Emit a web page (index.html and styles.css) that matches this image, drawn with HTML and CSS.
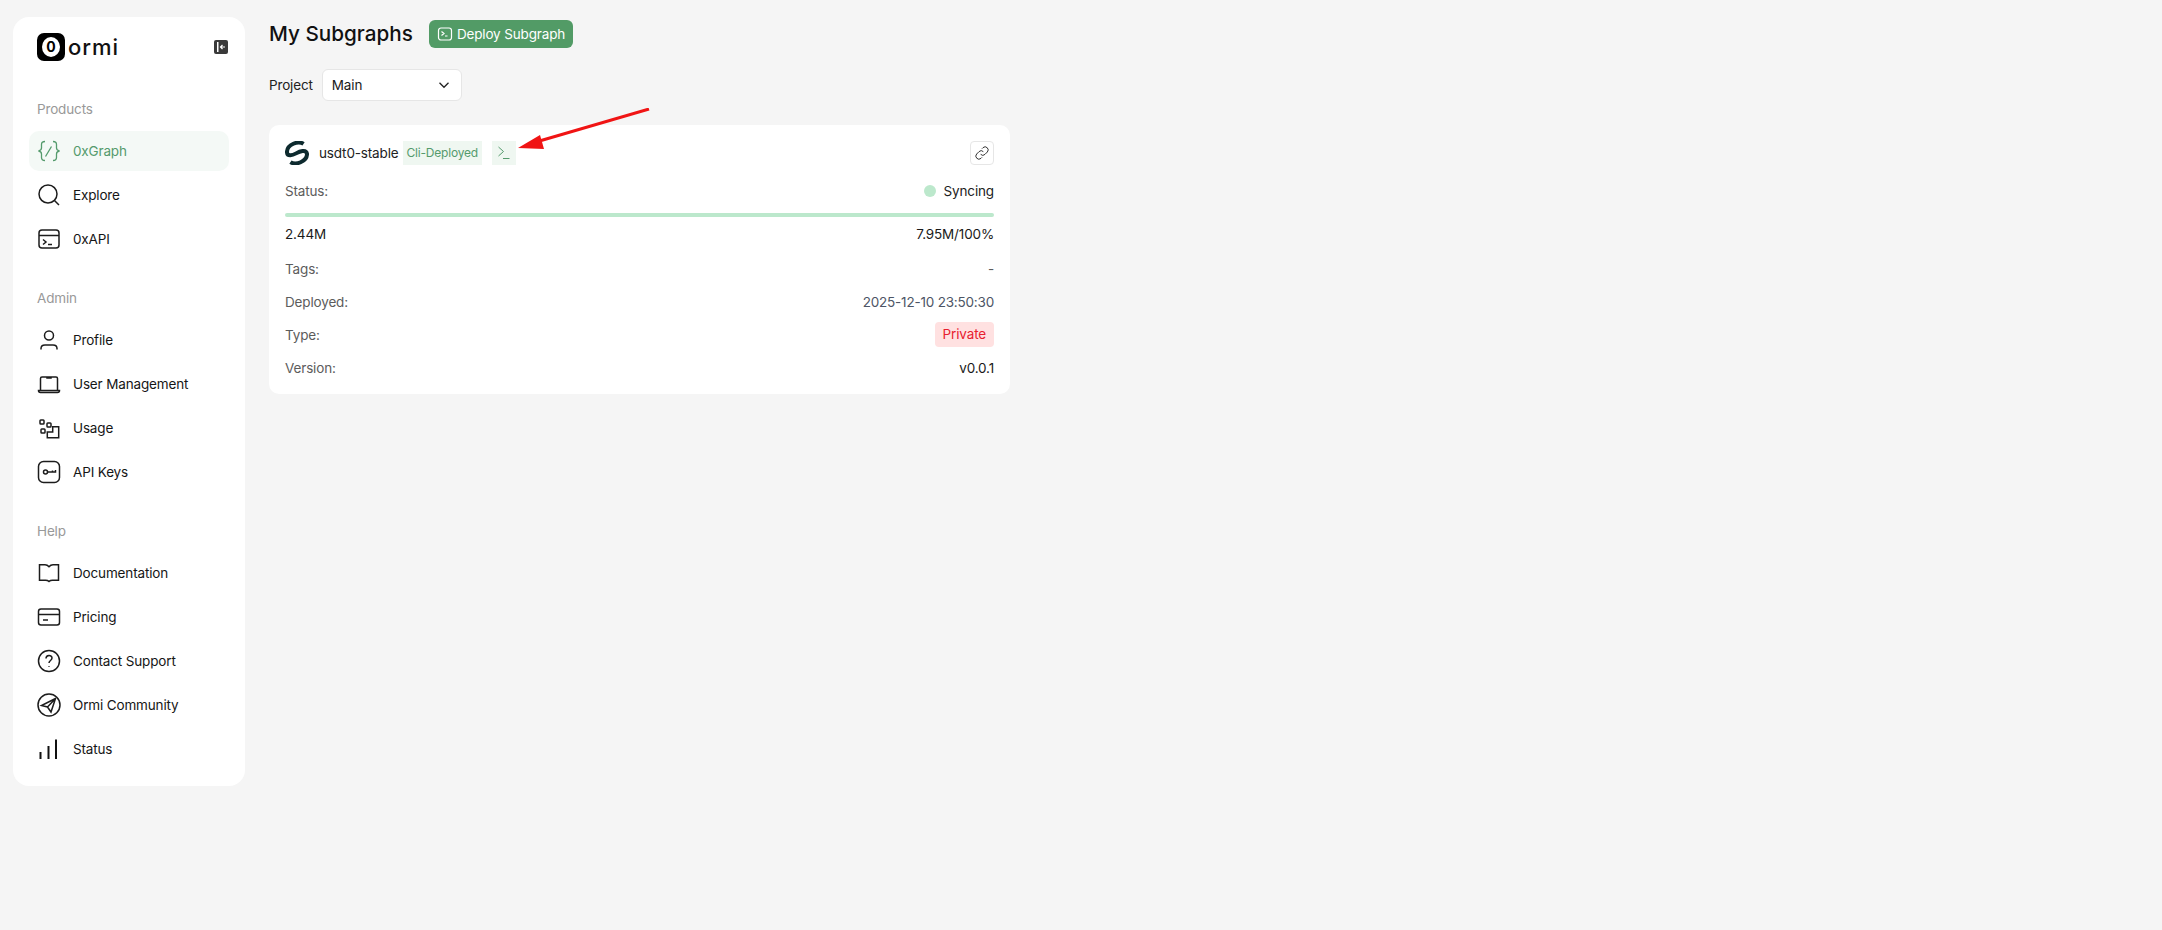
FILE: index.html
```html
<!DOCTYPE html>
<html lang="en">
<head>
<meta charset="utf-8">
<title>My Subgraphs</title>
<link rel="stylesheet" href="styles.css">
</head>
<body>
<div class="app">
  <aside class="sidebar">
    <div class="brand">
      <div class="logo">
        <span class="logo-mark"><span class="logo-zero">0</span></span>
        <span class="logo-text">ormi</span>
      </div>
      <svg class="collapse" viewBox="0 0 14 14"><rect width="14" height="14" rx="2" fill="#3a3a3a"/><rect x="3" y="2" width="1.500" height="10" fill="#fff"/><path d="M11 7H6.500M8.500 5 6.500 7l2 2" fill="none" stroke="#fff" stroke-width="1.200"/></svg>
    </div>
    <section class="group group-first">
      <div class="group-label">Products</div>
      <a class="item active"><svg class="ico" viewBox="0 0 24 24"><path d="M8 2.500c-3 0-3.500 1.500-3.500 3v3.500c0 1.500-.7 2.500-3 3 2.300.5 3 1.500 3 3v3.500c0 1.500.5 3 3.500 3M16 2.500c3 0 3.500 1.500 3.500 3v3.500c0 1.500.7 2.500 3 3-2.300.5-3 1.500-3 3v3.500c0 1.500-.5 3-3.500 3M14.500 7.500 8.500 17.500"/></svg><span>0xGraph</span></a>
      <a class="item"><svg class="ico" viewBox="0 0 24 24"><circle cx="11" cy="11" r="9"/><path d="m17.500 17.500 4.500 4.500"/></svg><span>Explore</span></a>
      <a class="item"><svg class="ico" viewBox="0 0 24 24"><rect x="2" y="3" width="20" height="18" rx="3"/><path d="M2 8.500h20M6 12.500l3 2.500-3 2.500M11 17.500h4"/></svg><span>0xAPI</span></a>
    </section>
    <section class="group">
      <div class="group-label">Admin</div>
      <a class="item"><svg class="ico" viewBox="0 0 24 24"><circle cx="12" cy="7.500" r="4.500"/><path d="M4 21.500v-1c0-2 1.500-3.500 4-3.500h8c2.500 0 4 1.500 4 3.500v1"/></svg><span>Profile</span></a>
      <a class="item"><svg class="ico" viewBox="0 0 24 24"><path d="M3.500 18V6.500A1.500 1.500 0 0 1 5 5h14a1.500 1.500 0 0 1 1.500 1.500V18M1.500 18.500h21c0 1.500-.8 2-2 2H3.500c-1.200 0-2-.5-2-2ZM10 5h4v1h-4z"/></svg><span>User Management</span></a>
      <a class="item"><svg class="ico" viewBox="0 0 24 24"><rect x="3" y="4" width="4" height="4" rx=".8"/><rect x="10" y="7" width="4" height="4" rx=".8"/><rect x="4" y="13" width="4" height="4" rx=".8"/><path d="M21.700 10.700V21.700H10.300V16H15.700V10.700z"/></svg><span>Usage</span></a>
      <a class="item"><svg class="ico" viewBox="0 0 24 24"><rect x="1.500" y="1.500" width="21" height="21" rx="5"/><circle cx="8.500" cy="12" r="2"/><path d="M10.500 12h8v-2M15.500 12v-1.500"/></svg><span>API Keys</span></a>
    </section>
    <section class="group">
      <div class="group-label">Help</div>
      <a class="item"><svg class="ico" viewBox="0 0 24 24"><path d="M2.500 3.700H8c2 0 3 .8 4 2 1-1.200 2-2 4-2h5.500v15.600h-6c-1.500 0-2.500.3-3.500 1.200-1-.9-2-1.200-3.500-1.200h-6z"/></svg><span>Documentation</span></a>
      <a class="item"><svg class="ico" viewBox="0 0 24 24"><rect x="1.500" y="4" width="21" height="16" rx="2.500"/><path d="M1.500 9.500h21M6 15h5"/></svg><span>Pricing</span></a>
      <a class="item"><svg class="ico" viewBox="0 0 24 24"><circle cx="12" cy="12" r="10.500"/><path d="M9 9.500c0-4 6-4 6-.5 0 2.500-3 2.500-3 5M12 17v.8"/></svg><span>Contact Support</span></a>
      <a class="item"><svg class="ico" viewBox="0 0 24 24"><circle cx="12" cy="12" r="11"/><path d="M18.500 5.500 4.500 12.500l6 1.500 3.500 5zM10.500 14l8-8.500"/></svg><span>Ormi Community</span></a>
      <a class="item"><svg class="ico ico-bars" viewBox="0 0 24 24"><path d="M3.500 22v-7M11.500 22V9M19 22V2.500"/></svg><span>Status</span></a>
    </section>
  </aside>

  <main class="main">
    <header class="page-head">
      <h1>My Subgraphs</h1>
      <button class="deploy">
        <svg viewBox="0 0 16 16"><rect x="1.500" y="2" width="13" height="12" rx="2.500"/><path d="m4.500 5.500 2.500 2-2.500 2M8 10h2.500"/></svg>
        <span>Deploy Subgraph</span>
      </button>
    </header>
    <div class="project">
      <label>Project</label>
      <div class="select"><span>Main</span>
        <svg viewBox="0 0 12 12"><path d="m1.500 3.800 4.500 4.500 4.500-4.500"/></svg>
      </div>
    </div>
    <article class="card">
      <div class="card-head">
        <div class="title-wrap">
          <svg class="token" viewBox="0 0 24 24"><path transform="rotate(-22 12 12)" d="M21.500 6C18 1 6 0 3 7.500 1.500 12 7 12.500 11 12c4-.5 11-.5 10 4.500C18 24 6 23 2.500 18" fill="none" stroke="#0d2a2e" stroke-width="4"/></svg>
          <span class="name">usdt0-stable</span>
          <span class="tag">Cli-Deployed</span>
          <span class="term"><svg viewBox="0 0 16 16"><path d="m2.500 2 5 4.500-5 4.500M7 13.500h6.500"/></svg></span>
        </div>
        <button class="link-btn"><svg viewBox="0 0 24 24"><path d="M10 14a4.500 4.500 0 0 0 6.500 0l3.500-3.500A4.600 4.600 0 0 0 13.500 4l-1.500 1.500M14 10a4.500 4.500 0 0 0-6.500 0L4 13.500a4.600 4.600 0 0 0 6.500 6.500l1.500-1.500"/></svg></button>
      </div>
      <div class="row row-status"><span class="k">Status:</span><span class="sync"><i class="dot"></i>Syncing</span></div>
      <div class="bar"></div>
      <div class="row row-progress"><span class="strong">2.44M</span><span class="strong">7.95M/100%</span></div>
      <div class="row row-tags"><span class="k">Tags:</span><span class="k">-</span></div>
      <div class="row row-deployed"><span class="k">Deployed:</span><span class="date">2025-12-10 23:50:30</span></div>
      <div class="row row-type"><span class="k">Type:</span><span class="badge">Private</span></div>
      <div class="row row-version"><span class="k">Version:</span><span class="strong">v0.0.1</span></div>
    </article>
  </main>
</div>
<svg class="arrow" viewBox="0 0 140 50"><path d="M131 1 18 34" stroke="#f01414" stroke-width="3" fill="none"/><path d="M0 40 22 27l4 14z" fill="#f01414"/></svg>
</body>
</html>
```
FILE: styles.css
```css
* { box-sizing: border-box; }
html, body { margin: 0; height: 100%; }
body {
  background: #f5f5f5;
  font-family: Inter, "Liberation Sans", sans-serif;
  font-size: 13.500px;
  letter-spacing: -.15px;
  color: #1a1a1a;
  position: relative;
}
.app { display: flex; align-items: flex-start; padding: 17px 0 0 13px; gap: 24px; }
.sidebar {
  width: 232px;
  height: 769px;
  background: #fff;
  border-radius: 16px;
  padding: 16px 16px 0;
  flex: none;
}
.brand { display: flex; justify-content: space-between; align-items: center; height: 28px; padding: 0 1px 0 8px; }
.logo { display: flex; align-items: center; gap: 3px; }
.logo-mark {
  width: 28px; height: 28px; background: #000; border-radius: 7px;
  display: flex; align-items: center; justify-content: center;
}
.logo-zero {
  width: 18px; height: 20px; background: #fff; border-radius: 50%;
  color: #000; font-size: 14px; font-weight: 700; line-height: 20px; text-align: center;
}
.logo-text { font-size: 22px; font-weight: 500; color: #111; line-height: 28px; letter-spacing: 1px; }
.collapse { width: 14px; height: 14px; }
.group { margin-top: 29px; }
.group-first { margin-top: 38px; }
.group-label { height: 20px; line-height: 20px; padding-left: 8px; color: #999; margin-bottom: 12px; }
.item {
  display: flex; align-items: center; gap: 12px;
  height: 40px; margin-bottom: 4px; padding-left: 8px;
  border-radius: 10px; color: #161616;
}
.item span { padding-bottom: 1px; }
.item:last-child { margin-bottom: 0; }
.item.active { background: #f4f9f6; color: #559b6d; }
.ico { width: 24px; height: 24px; flex: none; fill: none; stroke: #1c1c1c; stroke-width: 1.500; }
.item.active .ico { stroke: #559b6d; stroke-width: 1.300; }
.ico-bars { stroke-width: 2; stroke: #111; }
.main { width: 741px; }
.page-head { display: flex; align-items: center; gap: 16px; height: 34px; }
h1 { margin: 0; font-size: 20.700px; font-weight: 500; color: #111; line-height: 34px; letter-spacing: 0; }
.deploy {
  display: flex; align-items: center; gap: 4px;
  height: 28px; padding: 0 8px; border: 0; border-radius: 6px;
  background: #529b66; color: #fff; font: 13.500px Inter, "Liberation Sans", sans-serif; letter-spacing: -.15px;
}
.deploy svg { width: 16px; height: 16px; fill: none; stroke: #fff; stroke-width: 1.200; }
.project { display: flex; align-items: center; gap: 9px; margin-top: 18px; }
.project label { color: #222; }
.select {
  width: 140px; height: 32px; background: #fff; border: 1px solid #e6e6e6; border-radius: 6px;
  display: flex; align-items: center; justify-content: space-between; padding: 0 11px 0 9px;
}
.select svg { width: 12px; height: 12px; fill: none; stroke: #222; stroke-width: 1.300; }
.card { margin-top: 24px; background: #fff; border-radius: 10px; padding: 16px; height: 269px; }
.card-head { display: flex; justify-content: space-between; align-items: center; height: 24px; }
.title-wrap { display: flex; align-items: center; }
.token { width: 24px; height: 24px; }
.name { margin-left: 10px; color: #222; }
.tag { margin-left: 4px; height: 24px; padding: 0 4px; background: #eff7f1; color: #559b6d; font-size: 12px; line-height: 24px; letter-spacing: -.2px; }
.term { margin-left: 10px; width: 24px; height: 24px; background: #eff7f1; display: flex; align-items: center; justify-content: center; }
.term svg { width: 16px; height: 16px; fill: none; stroke: #559b6d; stroke-width: 1; }
.link-btn { width: 24px; height: 24px; padding: 3px; background: #fff; border: 1px solid #e6e6e6; border-radius: 4px; display: flex; }
.link-btn svg { width: 16px; height: 16px; fill: none; stroke: #333; stroke-width: 1.500; }
.row { display: flex; justify-content: space-between; align-items: center; }
.k { color: #5c5c5c; }
.strong { color: #1a1a1a; }
.date { color: #4d5565; letter-spacing: -.2px; }
.sync { display: flex; align-items: center; gap: 8px; color: #222; }
.dot { width: 12px; height: 12px; border-radius: 50%; background: #bce8cc; }
.row-status { margin-top: 14px; height: 24px; }
.bar { height: 4px; border-radius: 2px; background: #bce8cc; margin-top: 10px; }
.row-progress { margin-top: 7px; height: 20px; }
.row-tags { margin-top: 15px; height: 20px; }
.row-deployed { margin-top: 13px; height: 20px; }
.row-type { margin-top: 10px; height: 25px; }
.row-version { margin-top: 11px; height: 20px; }
.badge { height: 25px; padding: 0 8px; background: #ffe1e1; color: #e8202f; border-radius: 4px; line-height: 25px; }
.arrow { position: absolute; left: 518px; top: 108px; width: 140px; height: 50px; }
```
